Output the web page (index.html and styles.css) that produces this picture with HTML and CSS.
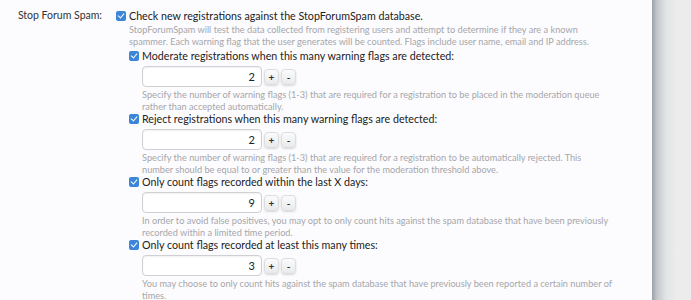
FILE: index.html
```html
<!DOCTYPE html>
<html lang="en">
<head>
  <meta charset="UTF-8">
  <title>Options: Spam Management</title>
  <link rel="stylesheet" href="styles.css">
</head>
<body>
<div class="page">
  <div class="main">
    <dl class="ctrl-unit">
      <dt>Stop Forum Spam:</dt>
      <dd>
        <label class="check"><span class="box"></span>Check new registrations against the StopForumSpam database.</label>
        <p class="explain">StopForumSpam will test the data collected from registering users and attempt to determine if they are a known<br>spammer. Each warning flag that the user generates will be counted. Flags include user name, email and IP address.</p>
        <ul class="options">
          <li>
            <label class="check"><span class="box"></span>Moderate registrations when this many warning flags are detected:</label>
            <div class="spinbox"><input type="text" value="2"><button>+</button><button>-</button></div>
            <p class="explain">Specify the number of warning flags (1-3) that are required for a registration to be placed in the moderation queue<br>rather than accepted automatically.</p>
          </li>
          <li>
            <label class="check"><span class="box"></span>Reject registrations when this many warning flags are detected:</label>
            <div class="spinbox"><input type="text" value="2"><button>+</button><button>-</button></div>
            <p class="explain">Specify the number of warning flags (1-3) that are required for a registration to be automatically rejected. This<br>number should be equal to or greater than the value for the moderation threshold above.</p>
          </li>
          <li>
            <label class="check"><span class="box"></span>Only count flags recorded within the last X days:</label>
            <div class="spinbox"><input type="text" value="9"><button>+</button><button>-</button></div>
            <p class="explain">In order to avoid false positives, you may opt to only count hits against the spam database that have been previously<br>recorded within a limited time period.</p>
          </li>
          <li>
            <label class="check"><span class="box"></span>Only count flags recorded at least this many times:</label>
            <div class="spinbox"><input type="text" value="3"><button>+</button><button>-</button></div>
            <p class="explain">You may choose to only count hits against the spam database that have previously been reported a certain number of<br>times.</p>
          </li>
        </ul>
      </dd>
    </dl>
  </div>
  <div class="side"></div>
</div>
</body>
</html>
```

FILE: styles.css
```css
body { margin: 0; font-family: Lato, "Liberation Sans", sans-serif; color: #333; background: #ececec; }
.page { display: flex; height: 300px; overflow: hidden; }
.main { width: 652px; flex: none; background: #fcfcfe; padding-top: 9px; }
.side { flex: 1; background: linear-gradient(to right, #9ba1a9 0, #c3c7cc 5px, #e2e4e6 14px, #ececec 24px); }

.ctrl-unit { display: flex; margin: 0; }
.ctrl-unit dt { width: 102px; flex: none; text-align: right; font-size: 10.5px; line-height: 13px; padding-right: 14px; }
.ctrl-unit dd { margin: 0; padding-right: 20px; flex: 1; }

.check { display: flex; align-items: center; font-size: 10.7px; line-height: 13px; color: #222; }
.box { width: 10px; height: 10px; flex: none; margin-right: 3px; border-radius: 2px; background: #3c86d9; position: relative; }
.box::after { content: ""; position: absolute; left: 3px; top: 1px; width: 3px; height: 5px; border: solid #fff; border-width: 0 1.5px 1.5px 0; transform: rotate(40deg); }

.explain { margin: 2px 0 0 13px; font-size: 9.2px; line-height: 12px; color: #a6a6aa; }
.options { list-style: none; margin: 1px 0 0 13px; padding: 0; }
.options li + li { margin-top: -1px; }

.spinbox { display: flex; align-items: center; gap: 2px; margin: 4px 0 0 13px; }
.spinbox input { width: 120px; height: 21px; box-sizing: border-box; padding: 0 6px; border: 1px solid #cfd0d4; border-radius: 4px; background: #fff; text-align: right; font: 11px Lato, "Liberation Sans", sans-serif; color: #222; box-shadow: inset 0 1px 2px rgba(0,0,0,0.06); }
.spinbox button { width: 15px; height: 16px; padding: 0; border: 1px solid #dcdde0; border-radius: 4px; background: linear-gradient(#fbfbfc, #e9eaec); font: bold 10px Lato, "Liberation Sans", sans-serif; color: #333; box-shadow: 0 1px 2px rgba(0,0,0,0.15); }
```
